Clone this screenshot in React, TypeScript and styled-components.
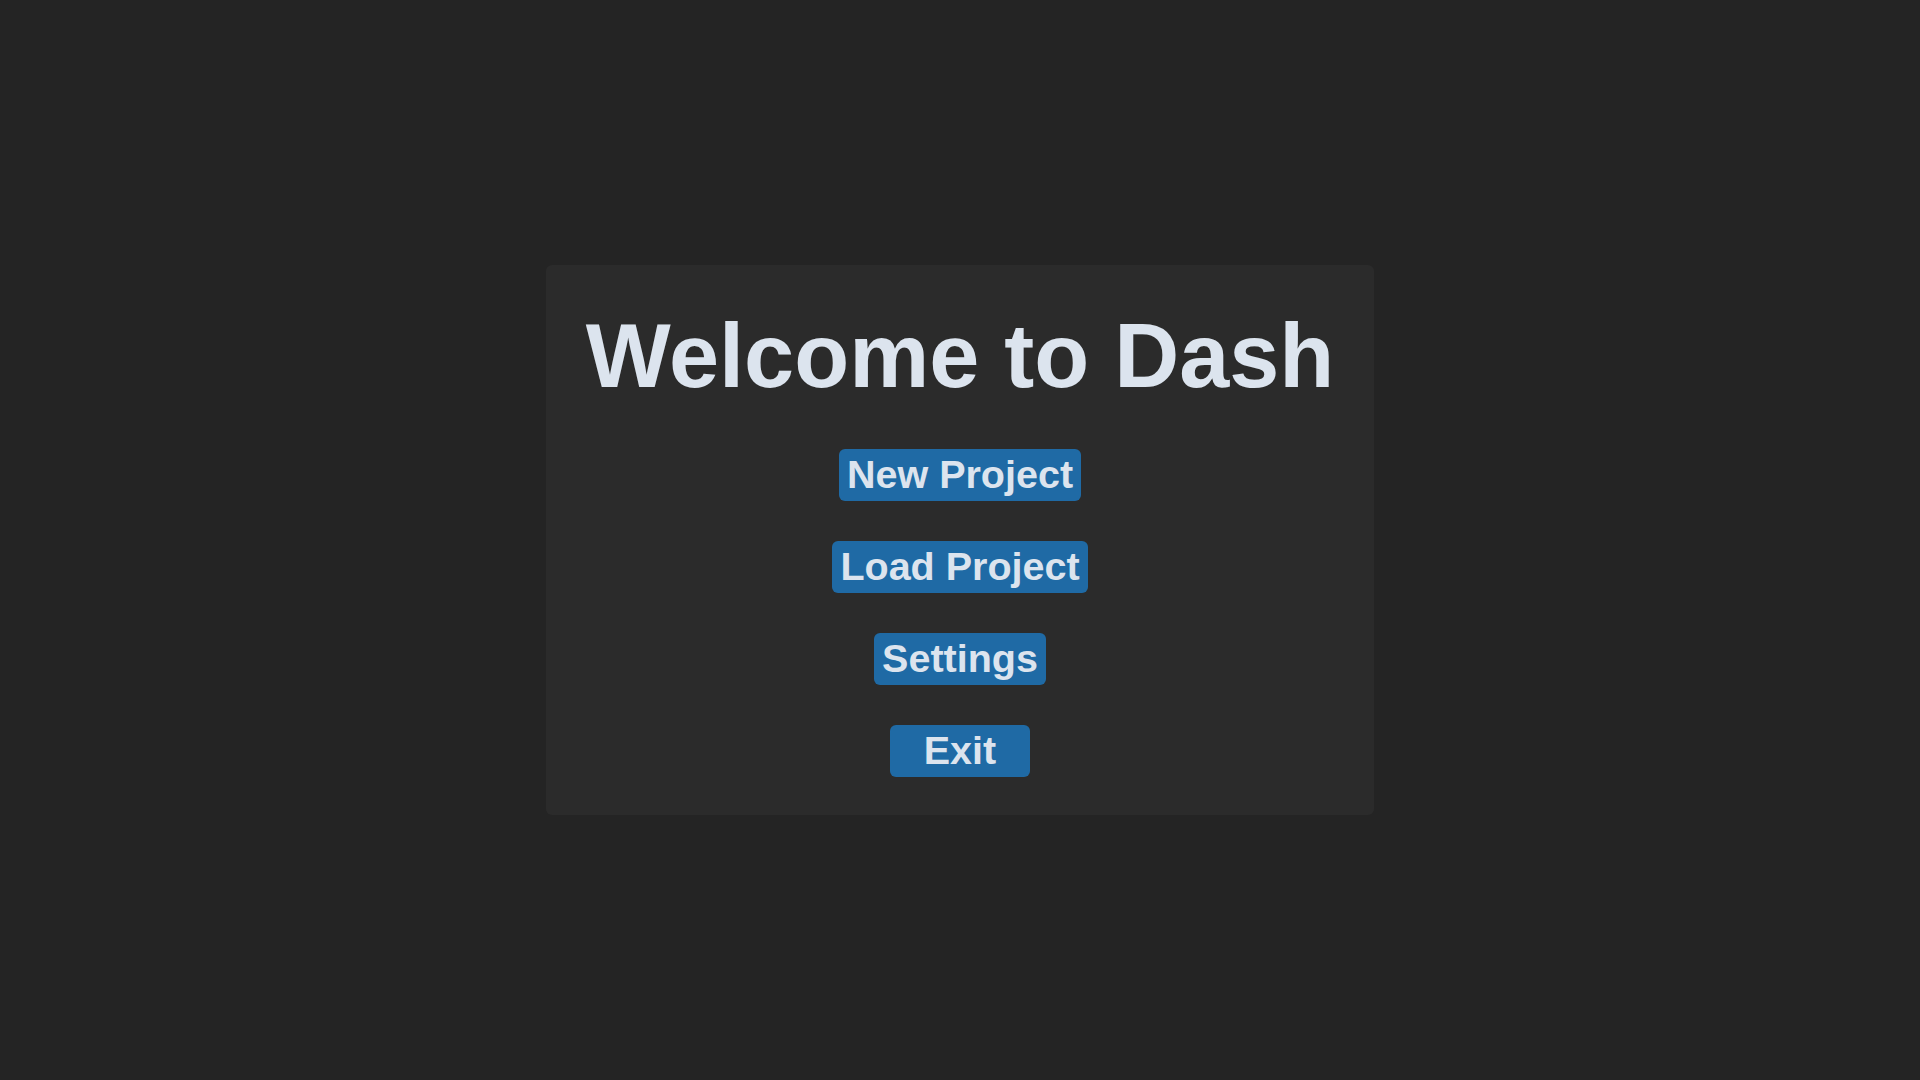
import React from 'react';
import styled, { createGlobalStyle } from 'styled-components';

const GlobalStyle = createGlobalStyle`
  html, body {
    margin: 0;
    padding: 0;
    background-color: #242424;
  }
  body {
    font-family: "Liberation Sans", Arial, sans-serif;
  }
`;

const items = ['New Project', 'Load Project', 'Settings', 'Exit'];

const App = () => {
  return (
    <>
      <GlobalStyle />
      <S.Page>
        <S.Card>
          <S.Title>Welcome to Dash</S.Title>
          <S.Menu>
            {items.map((label) => (
              <S.MenuBtn key={label}>{label}</S.MenuBtn>
            ))}
          </S.Menu>
        </S.Card>
      </S.Page>
    </>
  );
};

export default App;

const S = {
  Page: styled.div`
    width: 100vw;
    height: 100vh;
    display: flex;
    justify-content: center;
    align-items: center;
    background-color: #242424;
  `,
  Card: styled.div`
    display: flex;
    flex-direction: column;
    align-items: center;
    gap: 41px;
    padding: 40px 40px 38px;
    background-color: #2b2b2b;
    border-radius: 6px;
  `,
  Title: styled.h1`
    margin: 0;
    font-size: 90px;
    font-weight: 700;
    line-height: normal;
    color: #dce4ee;
  `,
  Menu: styled.div`
    display: flex;
    flex-direction: column;
    align-items: center;
    gap: 40px;
  `,
  MenuBtn: styled.button`
    cursor: pointer;
    height: 52px;
    min-width: 140px;
    padding: 0 8px;
    border: none;
    border-radius: 6px;
    background-color: #1f6aa5;
    color: #dce4ee;
    font-family: "Liberation Sans", Arial, sans-serif;
    font-size: 39.5px;
    font-weight: 700;
    line-height: 1;
  `,
};
